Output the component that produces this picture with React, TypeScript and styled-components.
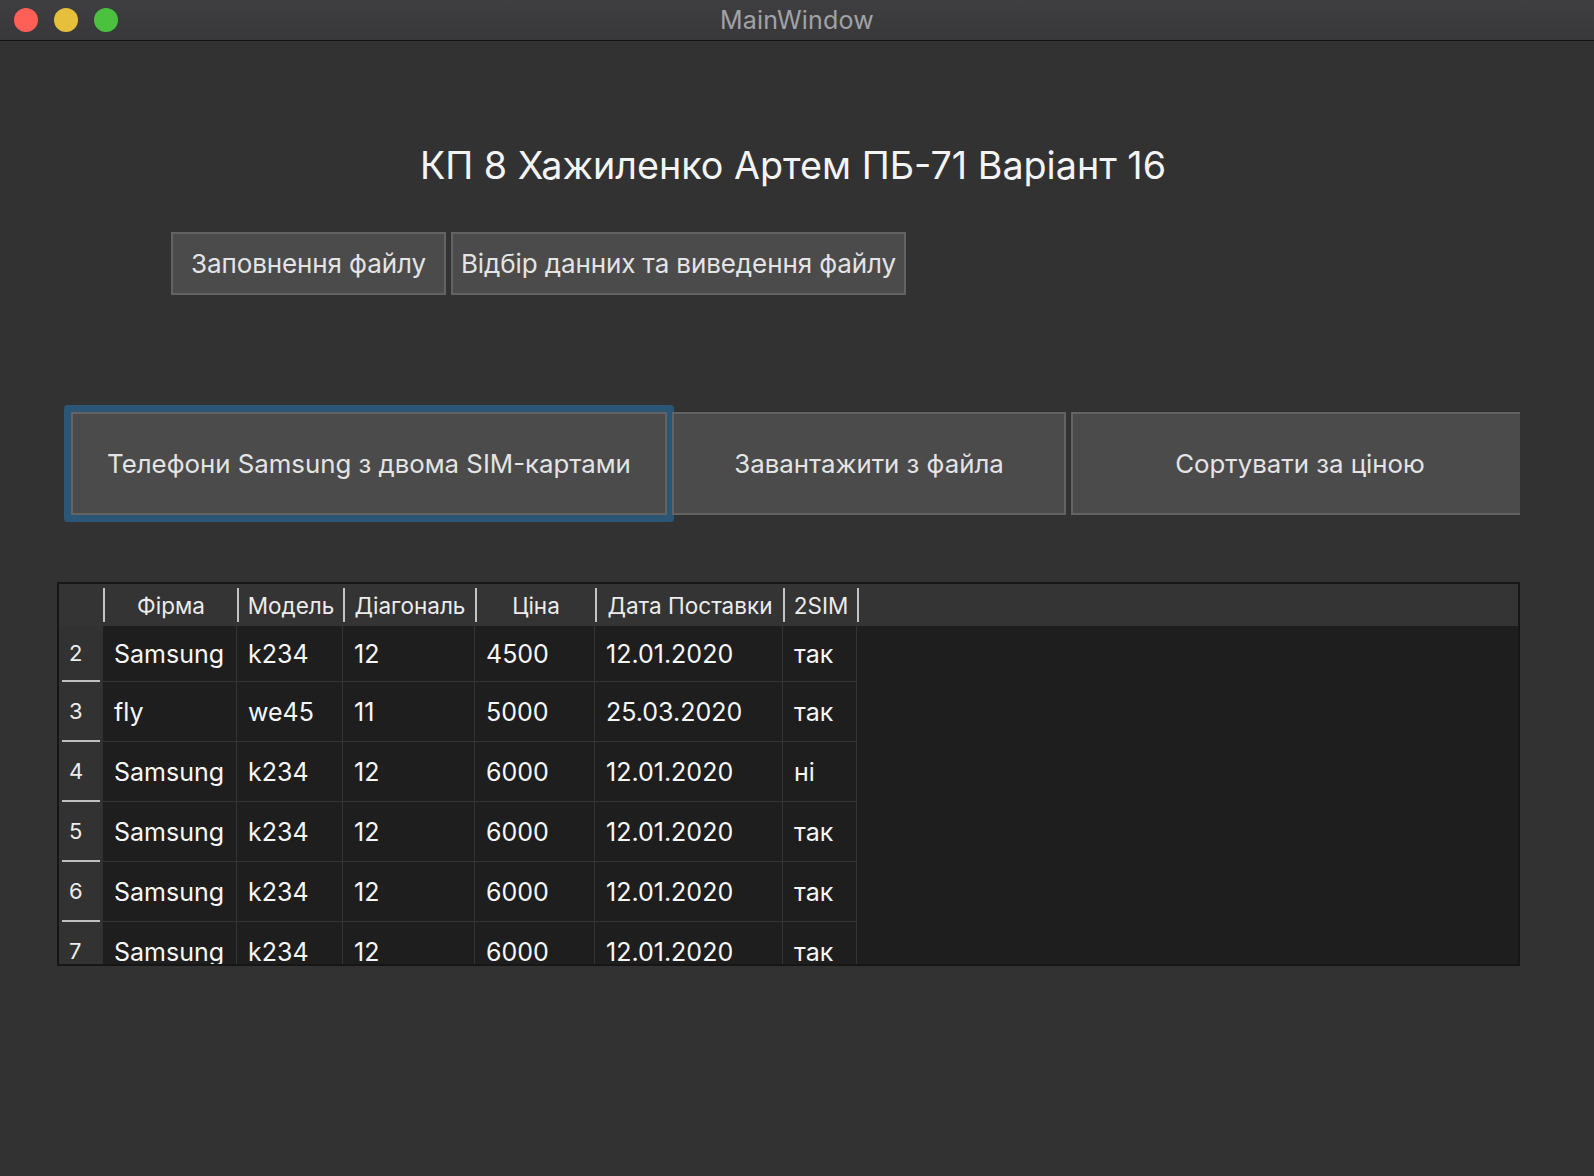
import React from 'react';
import styled, { createGlobalStyle } from 'styled-components';

const GlobalStyle = createGlobalStyle`
    html, body {
        margin: 0;
        padding: 0;
        background: #323232;
    }

    body {
        font-family: Inter, "Noto Sans", "Liberation Sans", sans-serif;
        color: #f0f0f0;
    }
`;

interface IPhone {
    id: number;
    firm: string;
    model: string;
    diagonal: string;
    price: string;
    date: string;
    twoSim: string;
};

const columns = [
    { key: 'firm', title: 'Фірма', width: 134 },
    { key: 'model', title: 'Модель', width: 106 },
    { key: 'diagonal', title: 'Діагональ', width: 132 },
    { key: 'price', title: 'Ціна', width: 120 },
    { key: 'date', title: 'Дата Поставки', width: 188 },
    { key: 'twoSim', title: '2SIM', width: 74 }
];

const phones: IPhone[] = [
    { id: 2, firm: 'Samsung', model: 'k234', diagonal: '12', price: '4500', date: '12.01.2020', twoSim: 'так' },
    { id: 3, firm: 'fly', model: 'we45', diagonal: '11', price: '5000', date: '25.03.2020', twoSim: 'так' },
    { id: 4, firm: 'Samsung', model: 'k234', diagonal: '12', price: '6000', date: '12.01.2020', twoSim: 'ні' },
    { id: 5, firm: 'Samsung', model: 'k234', diagonal: '12', price: '6000', date: '12.01.2020', twoSim: 'так' },
    { id: 6, firm: 'Samsung', model: 'k234', diagonal: '12', price: '6000', date: '12.01.2020', twoSim: 'так' },
    { id: 7, firm: 'Samsung', model: 'k234', diagonal: '12', price: '6000', date: '12.01.2020', twoSim: 'так' }
];

const Window = styled.div`
    width: 1594px;
    height: 1176px;
    background: #323232;
    overflow: hidden;
`;

const TitleBar = styled.div`
    height: 40px;
    display: grid;
    grid-template-columns: 1fr auto 1fr;
    align-items: center;
    background: linear-gradient(#3f3f42, #38383b);
    border-bottom: 1px solid #121212;
`;

const Lights = styled.div`
    display: flex;
    gap: 16px;
    padding-left: 14px;
`;

const Light = styled.span<{ $color: string }>`
    width: 24px;
    height: 24px;
    border-radius: 50%;
    background: ${props => props.$color};
`;

const WindowTitle = styled.div`
    font-size: 25px;
    color: #a2a2a5;
    letter-spacing: 0.2px;
`;

const Content = styled.div`
    display: flex;
    flex-direction: column;
`;

const Heading = styled.h1`
    margin: 101px 0 0;
    text-align: center;
    font-size: 37.7px;
    font-weight: 400;
    line-height: 46px;
    color: #f4f4f4;
    padding-right: 8px;
`;

const FileRow = styled.div`
    display: flex;
    gap: 5px;
    margin-top: 44px;
    padding-left: 171px;
`;

const Button = styled.div<{ $width: number; $height: number; $focused?: boolean }>`
    box-sizing: border-box;
    flex: none;
    width: ${props => props.$width}px;
    height: ${props => props.$height}px;
    display: flex;
    align-items: center;
    justify-content: center;
    background: #4b4b4b;
    border: 2px solid #636363;
    color: #e4e4e4;
    white-space: nowrap;
    box-shadow: ${props => props.$focused ? '0 0 0 7px #2c5675' : 'none'};
    border-radius: ${props => props.$focused ? '1px' : '0'};
`;

const FileButton = styled(Button)`
    font-size: 26px;
    letter-spacing: -0.1px;
`;

const ActionRow = styled.div`
    box-sizing: border-box;
    width: 1520px;
    display: flex;
    gap: 5px;
    margin-top: 117px;
    padding-left: 71px;
    overflow-x: clip;
`;

const ActionButton = styled(Button)`
    font-size: 25.8px;
`;

const TableFrame = styled.div`
    box-sizing: border-box;
    margin: 67px 0 0 57px;
    width: 1463px;
    height: 384px;
    border: 2px solid #161616;
    background: #1e1e1e;
    overflow: hidden;
`;

const HeaderRow = styled.div`
    display: flex;
    align-items: center;
    height: 42px;
    background: #343434;
`;

const Corner = styled.div`
    width: 44px;
    flex: none;
`;

const HeaderSep = styled.span`
    width: 2px;
    height: 34px;
    flex: none;
    background: #c4c4c4;
`;

const HeaderCell = styled.div<{ $width: number }>`
    width: ${props => props.$width - 2}px;
    flex: none;
    text-align: center;
    font-size: 22.5px;
    color: #ececec;
    white-space: nowrap;
`;

const Row = styled.div<{ $first?: boolean }>`
    display: flex;
    height: ${props => props.$first ? 56 : 60}px;
`;

const RowNumber = styled.div`
    box-sizing: border-box;
    width: 44px;
    flex: none;
    display: flex;
    align-items: center;
    padding-left: 10px;
    font-size: 22px;
    color: #ededed;
    background: #323232;
    border-bottom: 2px solid #c0c0c0;
    border-image: linear-gradient(90deg, #323232 4px, #c0c0c0 4px, #c0c0c0 40px, #323232 40px) 1;
`;

const Cell = styled.div<{ $width: number }>`
    box-sizing: border-box;
    width: ${props => props.$width}px;
    flex: none;
    display: flex;
    align-items: center;
    padding-left: 11px;
    font-size: 25px;
    color: #f7f7f7;
    border-right: 1px solid #343434;
    border-bottom: 1px solid #343434;
    white-space: nowrap;
`;

const App = () => {
    return (
        <React.Fragment>
            <GlobalStyle />
            <Window>
                <TitleBar>
                    <Lights>
                        <Light $color='#fe5f57' />
                        <Light $color='#e6bf3c' />
                        <Light $color='#4bc23f' />
                    </Lights>
                    <WindowTitle>MainWindow</WindowTitle>
                    <div />
                </TitleBar>
                <Content>
                    <Heading>КП 8 Хажиленко Артем ПБ-71 Варіант 16</Heading>
                    <FileRow>
                        <FileButton $width={275} $height={63}>Заповнення файлу</FileButton>
                        <FileButton $width={455} $height={63}>Відбір данних та виведення файлу</FileButton>
                    </FileRow>
                    <ActionRow>
                        <ActionButton $width={596} $height={103} $focused>Телефони Samsung з двома SIM-картами</ActionButton>
                        <ActionButton $width={394} $height={103}>Завантажити з файла</ActionButton>
                        <ActionButton $width={458} $height={103}>Сортувати за ціною</ActionButton>
                    </ActionRow>
                    <TableFrame>
                        <HeaderRow>
                            <Corner />
                            {columns.map(col => (
                                <React.Fragment key={`head-${col.key}`}>
                                    <HeaderSep />
                                    <HeaderCell $width={col.width}>{col.title}</HeaderCell>
                                </React.Fragment>
                            ))}
                            <HeaderSep />
                        </HeaderRow>
                        {phones.map((phone, i) => (
                            <Row key={`phone-${phone.id}`} $first={i === 0}>
                                <RowNumber>{phone.id}</RowNumber>
                                {columns.map(col => (
                                    <Cell key={`cell-${phone.id}-${col.key}`} $width={col.width}>
                                        {phone[col.key as keyof IPhone]}
                                    </Cell>
                                ))}
                            </Row>
                        ))}
                    </TableFrame>
                </Content>
            </Window>
        </React.Fragment>
    );
};

export default App;
